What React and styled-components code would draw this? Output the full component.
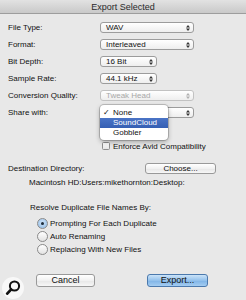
import React from "react";
import styled, { createGlobalStyle } from "styled-components";

const GlobalStyle = createGlobalStyle`
  html, body {
    margin: 0;
    padding: 0;
    background: #e8e8e8;
  }
  body {
    font-family: "Liberation Sans", Arial, sans-serif;
    color: #111111;
  }
`;

const Window = styled.div`
  position: relative;
  width: 246px;
  height: 300px;
  background: #e8e8e8;
  display: flex;
  flex-direction: column;
  overflow: hidden;
`;

const TitleBar = styled.div`
  height: 13px;
  line-height: 14px;
  text-align: center;
  font-size: 9px;
  color: #2a2a2a;
  background: linear-gradient(#e2e2e2, #c9c9c9);
  border-bottom: 1px solid #9d9d9d;
`;

const Form = styled.div`
  padding: 8px 0 0 8px;
  font-size: 8px;
`;

const FieldRow = styled.div`
  position: relative;
  display: grid;
  grid-template-columns: 92px auto;
  align-items: center;
  height: 11px;
  margin-bottom: 6px;
`;

const Label = styled.div`
  line-height: 11px;
  white-space: nowrap;
`;

const SelectBox = styled.div`
  position: relative;
  box-sizing: border-box;
  width: ${(p) => p.width}px;
  height: 11px;
  padding-left: 5px;
  line-height: 10px;
  border: 1px solid ${(p) => (p.disabled ? "#c2c2c2" : "#9c9c9c")};
  border-radius: 3px;
  background: linear-gradient(#ffffff, #eeeeee);
  color: ${(p) => (p.disabled ? "#a8a8a8" : "#111111")};
  white-space: nowrap;
`;

const Arrows = styled.svg`
  position: absolute;
  right: 3px;
  top: 2px;
`;

function Select({ value, width = 94, disabled }) {
  return (
    <SelectBox width={width} disabled={disabled}>
      {value}
      <Arrows width="4" height="6" viewBox="0 0 4 6">
        <path d="M0 2.4 L2 0 L4 2.4 Z M0 3.6 L2 6 L4 3.6 Z" fill={disabled ? "#b0b0b0" : "#333"} />
      </Arrows>
    </SelectBox>
  );
}

// open popup of the "Share with" select, drawn over it
const Menu = styled.div`
  position: absolute;
  left: 92px;
  top: -2px;
  width: 68px;
  box-sizing: border-box;
  padding: 3px 0 2px;
  background: #ffffff;
  border-radius: 4px;
  box-shadow: 0 0 0 1px rgba(0, 0, 0, 0.18), 0 2px 5px rgba(0, 0, 0, 0.3);
  z-index: 2;
`;

const MenuItem = styled.div`
  position: relative;
  height: 10px;
  line-height: 10px;
  padding-left: 13px;
  background: ${(p) => (p.active ? "linear-gradient(#4a74c6, #355fb3)" : "transparent")};
  color: ${(p) => (p.active ? "#ffffff" : "#111111")};
`;

const Check = styled.span`
  position: absolute;
  left: 3px;
  top: 0;
`;

const CheckRow = styled.div`
  display: flex;
  align-items: center;
  gap: 3px;
  margin: 24px 0 0 94px;
  height: 8px;
`;

const CheckBox = styled.div`
  box-sizing: border-box;
  width: 8px;
  height: 8px;
  border: 1px solid #8e8e8e;
  border-radius: 1.5px;
  background: linear-gradient(#ffffff, #e4e4e4);
`;

const DirRow = styled.div`
  display: grid;
  grid-template-columns: 137px 71px;
  align-items: center;
  margin-top: 13px;
  height: 11px;
`;

const PushButton = styled.div`
  box-sizing: border-box;
  width: ${(p) => p.width}px;
  height: ${(p) => p.height || 11}px;
  line-height: ${(p) => (p.height || 11) - 2}px;
  text-align: center;
  font-size: ${(p) => p.size || 8}px;
  border: 1px solid ${(p) => (p.primary ? "#4b79ad" : "#999999")};
  border-radius: 3px;
  background: ${(p) =>
    p.primary
      ? "linear-gradient(#cbe3f8, #93c1ec 50%, #7eb3e6 51%, #a4cdf2)"
      : "linear-gradient(#ffffff, #f1f1f1 50%, #e6e6e6 51%, #f7f7f7)"};
  color: #111111;
`;

const PathText = styled.div`
  margin: 4px 0 0 21px;
  line-height: 10px;
`;

const GroupLabel = styled.div`
  margin: 15px 0 0 22px;
  line-height: 10px;
`;

const RadioList = styled.div`
  margin: 4px 0 0 29px;
  display: flex;
  flex-direction: column;
`;

const RadioRow = styled.div`
  display: flex;
  align-items: center;
  gap: 2px;
  height: 13px;
`;

const Radio = styled.div`
  box-sizing: border-box;
  width: 11px;
  height: 11px;
  border-radius: 50%;
  border: 1px solid #8a8a8a;
  background: ${(p) =>
    p.checked ? "radial-gradient(circle at 50% 40%, #cfe3f7, #8fbbe6)" : "linear-gradient(#ffffff, #e2e2e2)"};
  display: flex;
  align-items: center;
  justify-content: center;
  &::after {
    content: "";
    display: ${(p) => (p.checked ? "block" : "none")};
    width: 3px;
    height: 3px;
    border-radius: 50%;
    background: #1b2a3a;
  }
`;

const Footer = styled.div`
  margin-top: auto;
  padding: 0 0 13px 36px;
  display: flex;
  gap: 52px;
`;

const Zoom = styled.div`
  position: absolute;
  left: 2px;
  bottom: 1px;
  width: 22px;
  height: 22px;
  border-radius: 50%;
  background: rgba(250, 250, 250, 0.85);
`;

export default function App() {
  return (
    <>
      <GlobalStyle />
      <Window>
        <TitleBar>Export Selected</TitleBar>
        <Form>
          <FieldRow>
            <Label>File Type:</Label>
            <Select value="WAV" />
          </FieldRow>
          <FieldRow>
            <Label>Format:</Label>
            <Select value="Interleaved" />
          </FieldRow>
          <FieldRow>
            <Label>Bit Depth:</Label>
            <Select value="16 Bit" width={57} />
          </FieldRow>
          <FieldRow>
            <Label>Sample Rate:</Label>
            <Select value="44.1 kHz" width={57} />
          </FieldRow>
          <FieldRow>
            <Label>Conversion Quality:</Label>
            <Select value="Tweak Head" disabled />
          </FieldRow>
          <FieldRow>
            <Label>Share with:</Label>
            {/* value is hidden under the open menu */}
            <Select value="" />
            <Menu>
              <MenuItem>
                <Check>✓</Check>None
              </MenuItem>
              <MenuItem active>SoundCloud</MenuItem>
              <MenuItem>Gobbler</MenuItem>
            </Menu>
          </FieldRow>

          <CheckRow>
            <CheckBox />
            <span>Enforce Avid Compatibility</span>
          </CheckRow>

          <DirRow>
            <Label>Destination Directory:</Label>
            <PushButton width={71}>Choose...</PushButton>
          </DirRow>
          <PathText>Macintosh HD:Users:mikethornton:Desktop:</PathText>

          <GroupLabel>Resolve Duplicate File Names By:</GroupLabel>
          <RadioList>
            <RadioRow>
              <Radio checked />
              <span>Prompting For Each Duplicate</span>
            </RadioRow>
            <RadioRow>
              <Radio />
              <span>Auto Renaming</span>
            </RadioRow>
            <RadioRow>
              <Radio />
              <span>Replacing With New Files</span>
            </RadioRow>
          </RadioList>
        </Form>

        <Footer>
          <PushButton width={59} height={13} size={9}>
            Cancel
          </PushButton>
          <PushButton width={61} height={13} size={9} primary>
            Export...
          </PushButton>
        </Footer>

        <Zoom>
          <svg width="22" height="22" viewBox="0 0 22 22">
            <circle cx="12.5" cy="9" r="4.6" fill="none" stroke="#111" strokeWidth="2" />
            <line x1="9.2" y1="12.4" x2="5.2" y2="16.6" stroke="#111" strokeWidth="2.8" strokeLinecap="round" />
          </svg>
        </Zoom>
      </Window>
    </>
  );
}
